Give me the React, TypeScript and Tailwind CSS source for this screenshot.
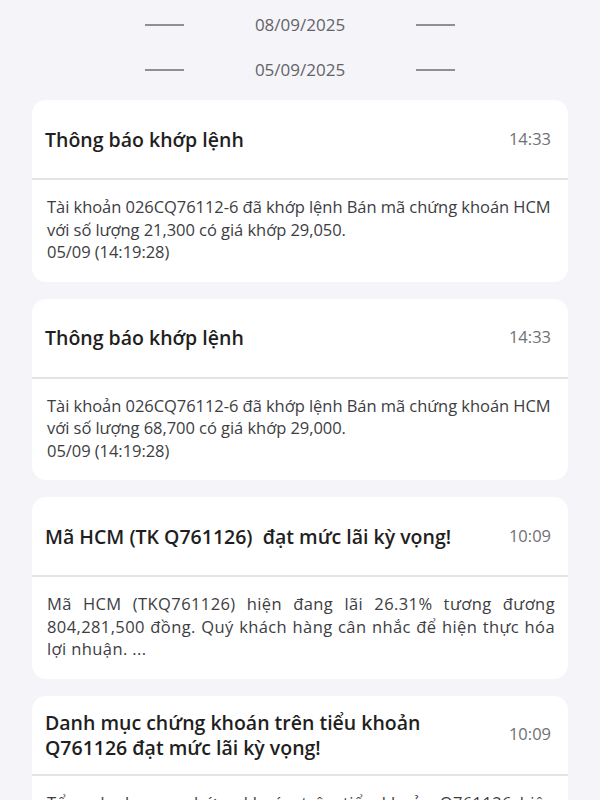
const notices = [
  {
    title: "Thông báo khớp lệnh",
    time: "14:33",
    body: "Tài khoản 026CQ76112-6 đã khớp lệnh Bán mã chứng khoán HCM với số lượng 21,300 có giá khớp 29,050.",
    stamp: "05/09 (14:19:28)",
    justify: false,
  },
  {
    title: "Thông báo khớp lệnh",
    time: "14:33",
    body: "Tài khoản 026CQ76112-6 đã khớp lệnh Bán mã chứng khoán HCM với số lượng 68,700 có giá khớp 29,000.",
    stamp: "05/09 (14:19:28)",
    justify: false,
  },
  {
    title: "Mã HCM (TK Q761126)  đạt mức lãi kỳ vọng!",
    time: "10:09",
    body: "Mã HCM (TKQ761126) hiện đang lãi 26.31% tương đương 804,281,500 đồng. Quý khách hàng cân nhắc để hiện thực hóa lợi nhuận. ...",
    stamp: "",
    justify: true,
  },
  {
    title: "Danh mục chứng khoán trên tiểu khoản Q761126 đạt mức lãi kỳ vọng!",
    time: "10:09",
    body: "Tổng danh mục chứng khoán trên tiểu khoản Q761126 hiện đang lãi 18.02% tương đương 1,204,530,000 đồng. Quý khách hàng cân nhắc để hiện thực hóa lợi nhuận. ...",
    stamp: "",
    justify: true,
  },
];

const DateRow = ({ date }: { date: string }) => (
  <div className="h-[45px] flex items-center justify-center gap-[70px]">
    <div className="w-[39px] h-[2px] bg-[#8e8e93]" />
    <span className="text-[17px] font-medium text-[#636368] w-[92px] text-center">
      {date}
    </span>
    <div className="w-[39px] h-[2px] bg-[#8e8e93]" />
  </div>
);

export default function App() {
  return (
    <div
      className="w-[600px] h-[800px] overflow-hidden bg-[#f4f4f9]"
      style={{ fontFamily: '"Open Sans", "Noto Sans", sans-serif' }}
    >
      <div className="pt-[2px]">
        <DateRow date="08/09/2025" />
        <DateRow date="05/09/2025" />
      </div>

      {/* notification cards */}
      <div className="mt-2 mx-[32px] flex flex-col gap-[17px]">
        {notices.map((n, idx) => (
          <div key={idx} className="bg-white rounded-[14px]">
            <div className="h-[80px] flex items-center justify-between pl-[13px] pr-[17px] border-b-2 border-[#e4e4e8]">
              <span className="text-[19.5px] font-semibold leading-[25px] text-[#1f1f22] max-w-[420px] whitespace-pre-wrap">
                {n.title}
              </span>
              <span className="text-[16.5px] text-[#707075]">{n.time}</span>
            </div>
            <div
              className={
                "pl-[15px] pr-[13px] pt-[16px] pb-[18px] text-[16.5px] leading-[22.5px] text-[#3d3d42] " +
                (n.justify ? "text-justify tracking-[0.4px]" : "tracking-[-0.05px]")
              }
            >
              <p>{n.body}</p>
              {n.stamp && <p>{n.stamp}</p>}
            </div>
          </div>
        ))}
      </div>
    </div>
  );
}
